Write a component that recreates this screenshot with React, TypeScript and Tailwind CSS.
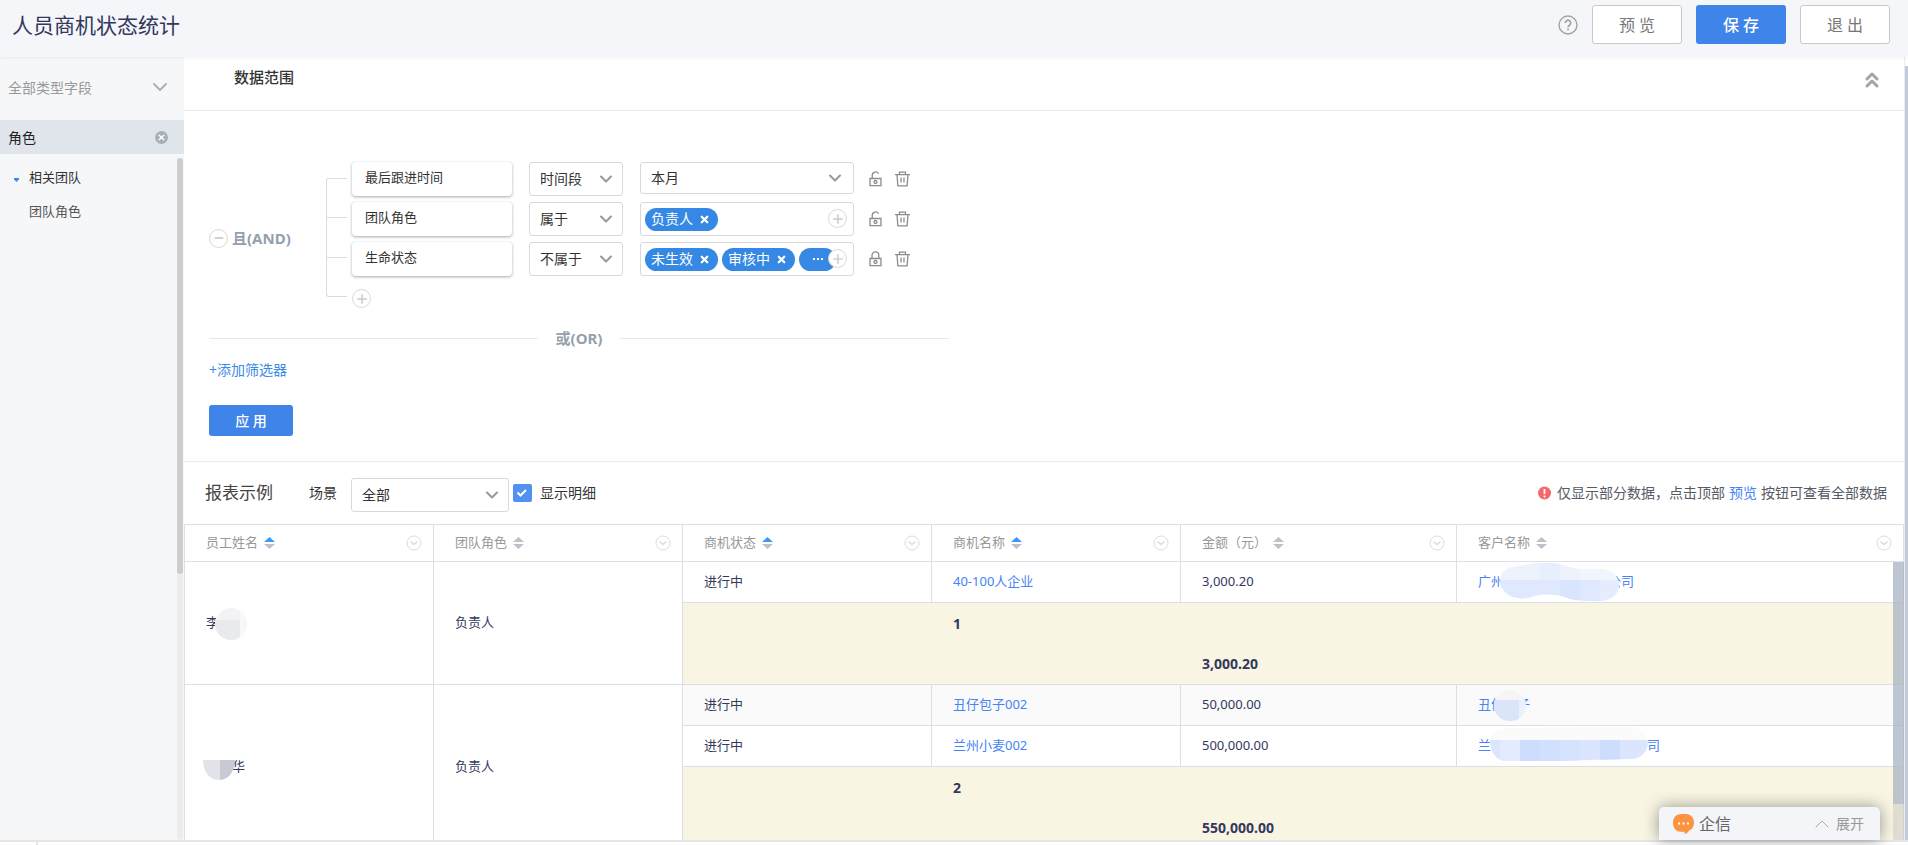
import type { ReactNode } from 'react';
import { ChevronDown, ChevronUp, ChevronsUp, Minus, Plus, X } from 'lucide-react';

type Sort = 'asc' | 'none';

const columns: { label: string; sort: Sort; width: string }[] = [
  { label: '员工姓名', sort: 'asc', width: 'w-[249px]' },
  { label: '团队角色', sort: 'none', width: 'w-[249px]' },
  { label: '商机状态', sort: 'asc', width: 'w-[249px]' },
  { label: '商机名称', sort: 'asc', width: 'w-[249px]' },
  { label: '金额（元）', sort: 'none', width: 'w-[276px]' },
  { label: '客户名称', sort: 'none', width: '' },
];

const filters = [
  { field: '最后跟进时间', operator: '时间段', value: '本月', tags: [], locked: false },
  { field: '团队角色', operator: '属于', value: '', tags: ['负责人'], locked: false },
  { field: '生命状态', operator: '不属于', value: '', tags: ['未生效', '审核中'], more: true, locked: true },
];

function SelectBox({ label, value, className, arrow }: { label: string; value: string; className: string; arrow: string }) {
  return (
    <div className={`relative ${className}`}>
      <select
        aria-label={label}
        className="block w-full h-full appearance-none rounded-[3px] border border-[#d9d9d9] bg-white pl-[10px] text-sm text-[#333]"
      >
        <option>{value}</option>
      </select>
      <ChevronDown
        className={`absolute top-1/2 -translate-y-1/2 w-5 h-5 text-[#999] pointer-events-none ${arrow}`}
        strokeWidth={2.5}
      />
    </div>
  );
}

function RoundIcon({ label, children }: { label: string; children: ReactNode }) {
  return (
    <button
      aria-label={label}
      className="w-[19px] h-[19px] shrink-0 rounded-full border border-[#d9d9d9] bg-white text-[#d0d0d0] flex items-center justify-center"
    >
      {children}
    </button>
  );
}

function LockIcon({ locked }: { locked: boolean }) {
  return (
    <svg width="13" height="16" viewBox="0 0 13 16" fill="none" stroke="#8c8c8c" strokeWidth="1.3">
      <path d="M1 7.5h11v7.2H1z" />
      <path d={locked ? 'M3 7.5V4.3a3.4 3.4 0 0 1 6.8 0v3.2' : 'M3.2 7.5V4.3A3.4 3.4 0 0 1 9.6 2.8'} />
      <circle cx="6.5" cy="11" r="1.5" />
    </svg>
  );
}

function TrashIcon() {
  return (
    <svg width="15" height="16" viewBox="0 0 15 16" fill="none" stroke="#8c8c8c" strokeWidth="1.3">
      <path d="M0 3.6h15M4.5 3.4V1.2h6v2.2M2 3.8l.9 11h9.2l.9-11M6 6.5v5M9 6.5v5" />
    </svg>
  );
}

function SortIcon({ sort }: { sort: Sort }) {
  return (
    <svg width="11" height="12" viewBox="0 0 11 12">
      <path d="M5.5 0L11 5H0z" fill={sort === 'asc' ? '#3e97fb' : '#bcc1cc'} />
      <path d="M5.5 12L11 7H0z" fill="#bcc1cc" />
    </svg>
  );
}

function ColumnMenuIcon() {
  return (
    <svg width="16" height="16" viewBox="0 0 16 16" fill="none">
      <circle cx="8" cy="8" r="7" stroke="#dcdcdc" />
      <path d="M4.5 6.5L8 9.5l3.5-3" stroke="#dcdcdc" strokeWidth="1.6" />
    </svg>
  );
}

/* Mosaic patches that hide parts of personal names */
function Mosaic({ id, shape, width, height, tiles, className }: {
  id: string;
  shape: string;
  width: number;
  height: number;
  tiles: [number, number, number, number, string][];
  className: string;
}) {
  return (
    <svg className={`absolute ${className}`} width={width} height={height} viewBox={`0 0 ${width} ${height}`}>
      <clipPath id={id}>
        <path d={shape} />
      </clipPath>
      <g clipPath={`url(#${id})`} shapeRendering="crispEdges">
        {tiles.map(([x, y, w, h, fill], i) => (
          <rect key={i} x={x} y={y} width={w} height={h} fill={fill} />
        ))}
      </g>
    </svg>
  );
}

function Cell({ children, rowSpan }: { children?: ReactNode; rowSpan?: number }) {
  return (
    <td rowSpan={rowSpan} className="relative border-b border-r border-[#dcdfe6] pl-[21px] align-middle">
      {children}
    </td>
  );
}

function DetailCells({ name, amount, customer }: { name: string; amount: string; customer: ReactNode }) {
  return (
    <>
      <Cell>进行中</Cell>
      <Cell>
        <a href="#" className="text-[#4583f6]">{name}</a>
      </Cell>
      <Cell>{amount}</Cell>
      <Cell>{customer}</Cell>
    </>
  );
}

function SummaryRows({ count, amount }: { count: string; amount: string }) {
  return (
    <>
      <tr className="h-[41px] bg-[#f8f5e3] text-sm font-bold">
        <td />
        <td className="pl-[21px]">{count}</td>
        <td />
        <td className="border-r border-[#dcdfe6]" />
      </tr>
      <tr className="h-[41px] bg-[#f8f5e3] text-sm font-bold">
        <td className="border-b border-[#dcdfe6]" />
        <td className="border-b border-[#dcdfe6]" />
        <td className="border-b border-[#dcdfe6] pl-[21px]">{amount}</td>
        <td className="border-b border-r border-[#dcdfe6]" />
      </tr>
    </>
  );
}

function TopBar() {
  return (
    <header className="relative z-10 h-[57px] shrink-0 bg-[#f4f6fa] shadow-[0_1px_3px_rgba(0,0,0,0.06)] flex items-start pl-3 pr-[18px]">
      <h1 className="text-[21px] leading-[30px] pt-[10px] text-[#33385c]">人员商机状态统计</h1>
      <div className="ml-auto flex gap-[14px] pt-[5px] text-base">
        <button aria-label="帮助" className="h-10 flex items-center">
          <svg width="20" height="20" viewBox="0 0 20 20" fill="none" stroke="#a3a3a3" strokeWidth="1.4">
            <circle cx="10" cy="10" r="9" />
            <path d="M7.3 8a2.7 2.7 0 1 1 4.2 2.2c-.9.6-1.4 1-1.4 2" strokeWidth="1.7" />
            <path d="M10.1 13.5v1.7" strokeWidth="1.7" />
          </svg>
        </button>
        <button className="w-[90px] h-[39px] rounded-[3px] border border-[#c9c9c9] bg-white text-[#777]">预 览</button>
        <button className="w-[90px] h-[39px] rounded-[3px] bg-[#3e84e9] text-white font-medium">保 存</button>
        <button className="w-[90px] h-[39px] rounded-[3px] border border-[#c9c9c9] bg-white text-[#777]">退 出</button>
      </div>
    </header>
  );
}

function Sidebar() {
  return (
    <aside className="w-[184px] shrink-0 bg-[#f5f7f9] flex flex-col">
      <div className="relative h-[63px] shrink-0">
        <select aria-label="字段类型" className="block w-full h-full appearance-none pl-2 pb-[2px] text-sm text-[#999]">
          <option>全部类型字段</option>
        </select>
        <ChevronDown className="absolute right-3 top-[18px] w-6 h-6 text-[#a6b3bd] pointer-events-none" strokeWidth={2} />
      </div>
      <div className="relative h-[34px] shrink-0 bg-[#e0e5ec]">
        <input aria-label="搜索字段" defaultValue="角色" className="block w-full h-full pl-2 text-sm text-[#222] outline-none" />
        <button
          aria-label="清除"
          className="absolute right-4 top-[11px] w-[13px] h-[13px] rounded-full bg-[#a6b1bb] text-white flex items-center justify-center"
        >
          <X className="w-[9px] h-[9px]" strokeWidth={4} />
        </button>
      </div>
      <div className="flex-1 min-h-0 flex pt-1">
        <ul className="flex-1 pt-[3px] text-[13px]">
          <li className="h-[34px] flex items-center pl-[14px] text-[#333]">
            <svg width="5" height="4" viewBox="0 0 5 4" className="mt-1 mr-[10px]">
              <path d="M0 0h5v1.5L2.5 4 0 1.5z" fill="#3b8bf0" />
            </svg>
            相关团队
          </li>
          <li className="h-[34px] flex items-center pl-[29px] text-[#555]">团队角色</li>
        </ul>
        <div className="w-[6px] mr-px rounded-full bg-[#ececec]">
          <div className="h-[61%] rounded-full bg-[#cdcdcd]" />
        </div>
      </div>
    </aside>
  );
}

function FilterSection() {
  return (
    <section className="border-b border-[#ebebeb] px-[25px] pt-[51px] pb-[25px]">
      <div className="flex">
        <div className="w-[117px] shrink-0 pt-16">
          <div className="h-6 flex items-center gap-1 text-[15px] font-bold text-[#93a0ae]">
            <RoundIcon label="移除条件组"><Minus className="w-3 h-3" strokeWidth={4} /></RoundIcon>
            <span>且(AND)</span>
          </div>
        </div>
        <div className="w-[21px] mr-[5px] mt-4 h-[119px] border border-r-0 border-[#dcdcdc] rounded-l-[3px]">
          <div className="h-[39px] border-b border-[#dcdcdc]" />
          <div className="h-10 border-b border-[#dcdcdc]" />
        </div>
        <div className="flex flex-col gap-[6px]">
          {filters.map((f) => (
            <div key={f.field} className="h-[34px] flex items-start">
              <button className="w-[160px] h-[34px] mr-[17px] rounded-[4px] bg-white shadow-[0_1px_3px_rgba(100,115,130,0.6)] pl-[13px] pb-[2px] text-left text-[13px] text-[#333]">
                {f.field}
              </button>
              <SelectBox label={`${f.field}条件`} value={f.operator} className="w-[94px] h-[34px] mr-[17px]" arrow="right-[7px]" />
              {f.value ? (
                <SelectBox label={`${f.field}取值`} value={f.value} className="w-[214px] h-8" arrow="right-[9px]" />
              ) : (
                <div className="relative w-[214px] h-[34px] rounded-[3px] border border-[#d9d9d9] flex items-center gap-1 pl-1">
                  {f.tags.map((tag) => (
                    <span key={tag} className="h-[23px] rounded-full bg-[#3688e5] text-white text-sm flex items-center pl-[6px] pr-2 gap-[6px]">
                      {tag}
                      <button aria-label={`移除${tag}`}><X className="w-[11px] h-[11px]" strokeWidth={5} /></button>
                    </span>
                  ))}
                  {f.more && (
                    <span className="w-[37px] h-[23px] rounded-full bg-[#3688e5] flex items-center gap-[2px] pl-[14px]">
                      <i className="w-[2px] h-[2px] bg-white" />
                      <i className="w-[2px] h-[2px] bg-white" />
                      <i className="w-[2px] h-[2px] bg-white" />
                    </span>
                  )}
                  <div className="absolute right-[6px] top-[6px]">
                    <RoundIcon label={`添加${f.field}`}><Plus className="w-[14px] h-[14px]" strokeWidth={3} /></RoundIcon>
                  </div>
                </div>
              )}
              <button aria-label={f.locked ? '解锁' : '锁定'} className="h-[34px] ml-[15px] mr-[13px]"><LockIcon locked={f.locked} /></button>
              <button aria-label="删除" className="h-[34px]"><TrashIcon /></button>
            </div>
          ))}
          <div className="pt-[7px]">
            <RoundIcon label="添加条件"><Plus className="w-[14px] h-[14px]" strokeWidth={3} /></RoundIcon>
          </div>
        </div>
      </div>

      <div className="mt-[18px] h-6 max-w-[740px] flex items-center gap-[18px] text-[15px] font-bold text-[#93a0ae]">
        <span className="h-px flex-1 bg-[#e8e8e8]" />
        或(OR)
        <span className="h-px flex-1 bg-[#e8e8e8]" />
      </div>
      <div className="mt-2 h-6 flex items-center">
        <a href="#" className="text-sm text-[#3b8be6]">+添加筛选器</a>
      </div>
      <button className="block mt-[23px] w-[84px] h-[31px] rounded-[3px] bg-[#3e84e9] text-sm font-medium text-white">应 用</button>
    </section>
  );
}

function ReportToolbar() {
  return (
    <div className="h-[62px] pl-[21px] pr-[17px] flex items-center text-sm text-[#333]">
      <h2 className="text-[17px] text-[#444]">报表示例</h2>
      <span className="ml-9 mr-[14px]">场景</span>
      <SelectBox label="场景" value="全部" className="w-[158px] h-[34px] mt-1" arrow="right-[7px]" />
      <label className="ml-1 flex items-center gap-2">
        <span className="relative w-[19px] h-[18px]">
          <input type="checkbox" defaultChecked className="block w-full h-full appearance-none rounded-[2px] bg-[#5391f1]" />
          <svg className="absolute inset-0 pointer-events-none" width="19" height="18" viewBox="0 0 19 18" fill="none">
            <path d="M4.5 8.5l3 3 5.5-5.5" stroke="#fff" strokeWidth="2" />
          </svg>
        </span>
        显示明细
      </label>
      <p className="ml-auto flex items-center text-[#555a66]">
        <svg width="13" height="14" viewBox="0 0 13 14" className="mr-[6px]">
          <circle cx="6.5" cy="7" r="6.5" fill="#f4676b" />
          <path d="M6.5 3v5M6.5 9.5v2" stroke="#fff" strokeWidth="1.8" />
        </svg>
        仅显示部分数据，点击顶部
        <a href="#" className="mx-1 text-[#4583f6]">预览</a>
        按钮可查看全部数据
      </p>
    </div>
  );
}

function ReportTable() {
  return (
    <div className="relative flex-1 min-h-0 overflow-hidden">
      <table className="w-full table-fixed border-separate border-spacing-0 border-l border-[#dcdfe6] text-[13px] text-[#33385c]">
        <thead>
          <tr className="h-[38px]">
            {columns.map((c) => (
              <th key={c.label} className={`${c.width} border-y border-r border-[#dcdfe6] pl-[21px] pr-[11px] font-normal text-[#999]`}>
                <div className="flex items-center gap-[6px]">
                  {c.label}
                  <button aria-label={`按${c.label}排序`}><SortIcon sort={c.sort} /></button>
                  <button aria-label={`${c.label}菜单`} className="ml-auto"><ColumnMenuIcon /></button>
                </div>
              </th>
            ))}
          </tr>
        </thead>
        <tbody>
          <tr className="h-[41px]">
            <Cell rowSpan={3}>
              李
              <Mosaic
                id="mask-li"
                className="left-[30px] top-[46px]"
                width={32}
                height={32}
                shape="M16 0a16 16 0 1 1 0 32a16 16 0 1 1 0-32z"
                tiles={[[0, 0, 32, 32, '#f8f8f9'], [5, 0, 20, 12, '#f3f3f5'], [0, 12, 25, 20, '#e9eaed']]}
              />
            </Cell>
            <Cell rowSpan={3}>负责人</Cell>
            <DetailCells
              name="40-100人企业"
              amount="3,000.20"
              customer={
                <a href="#" className="flex gap-[104px] text-[#4583f6]">
                  <span>广州</span>
                  <span>公司</span>
                  <Mosaic
                    id="mask-gz"
                    className="left-[43px] top-[1px]"
                    width={119}
                    height={38}
                    shape="M0 16C1 8 8 3 20 3C34-1 54-1 64 2C76 7 84 6 100 6C112 6 119 14 119 22C119 32 110 38 98 38C84 38 74 38 62 33C50 31 42 31 34 33C26 37 12 36 6 30C2 26 0 22 0 16z"
                    tiles={[
                      [0, 0, 119, 17, '#edf2fd'],
                      [40, 0, 20, 17, '#e8effc'],
                      [80, 0, 39, 17, '#f1f5fe'],
                      [0, 17, 119, 21, '#dfe8fe'],
                      [60, 17, 20, 21, '#d9e5fd'],
                      [100, 17, 19, 21, '#e5ecfd'],
                    ]}
                  />
                </a>
              }
            />
          </tr>
          <SummaryRows count="1" amount="3,000.20" />
          <tr className="h-[41px]">
            <Cell rowSpan={4}>
              <span className="pl-[26px]">华</span>
              <Mosaic
                id="mask-hua"
                className="left-[18px] top-[75px]"
                width={32}
                height={20}
                shape="M0 0h32C32 11 26 20 16 20S0 11 0 0z"
                tiles={[[0, 0, 17, 20, '#e2e3e8'], [17, 0, 15, 20, '#c8cad3']]}
              />
            </Cell>
            <Cell rowSpan={4}>负责人</Cell>
            <td className="bg-[#fafafa] border-b border-r border-[#dcdfe6] pl-[21px]">进行中</td>
            <td className="bg-[#fafafa] border-b border-r border-[#dcdfe6] pl-[21px]">
              <a href="#" className="text-[#4583f6]">丑仔包子002</a>
            </td>
            <td className="bg-[#fafafa] border-b border-r border-[#dcdfe6] pl-[21px]">50,000.00</td>
            <td className="relative bg-[#fafafa] border-b border-r border-[#dcdfe6] pl-[21px]">
              <a href="#" className="text-[#4583f6]">丑仔包子</a>
              <Mosaic
                id="mask-chou"
                className="left-[37px] top-[5px]"
                width={32}
                height={31}
                shape="M16 0a16 15.5 0 1 1 0 31a16 15.5 0 1 1 0-31z"
                tiles={[[0, 0, 32, 10, '#f5f5f5'], [0, 10, 32, 21, '#eaf0fc'], [0, 10, 25, 21, '#dae5f9']]}
              />
            </td>
          </tr>
          <tr className="h-[41px]">
            <DetailCells
              name="兰州小麦002"
              amount="500,000.00"
              customer={
                <a href="#" className="flex gap-[156px] text-[#4583f6]">
                  <span>兰</span>
                  <span>司</span>
                  <Mosaic
                    id="mask-lan"
                    className="left-[33px] top-[1px]"
                    width={158}
                    height={34}
                    shape="M0 14C0 6 8 1 16 1L140 0C150 0 158 7 158 15C158 25 150 32 142 32L98 33 70 34H16C7 34 0 26 0 14z"
                    tiles={[
                      [0, 0, 158, 13, '#fbfbfc'],
                      [0, 13, 158, 21, '#dbe6fe'],
                      [10, 13, 20, 21, '#e4ebfe'],
                      [30, 13, 20, 21, '#cdddfe'],
                      [50, 13, 20, 21, '#d0e0fe'],
                      [70, 13, 20, 21, '#d6e3fe'],
                      [110, 13, 20, 21, '#cdddfe'],
                    ]}
                  />
                </a>
              }
            />
          </tr>
          <SummaryRows count="2" amount="550,000.00" />
        </tbody>
      </table>
      {/* Translucent scrollbar over the table body */}
      <div className="absolute right-0 top-[38px] bottom-0 w-[11px] bg-[#b8b8b8]/40">
        <div className="h-[87%] bg-[#a5b3c6]/60" />
      </div>
    </div>
  );
}

function ChatDock() {
  return (
    <button className="absolute right-7 bottom-[5px] z-20 w-[221px] h-[33px] rounded-t-[5px] bg-[#f3f5f8] shadow-[0_0_16px_rgba(0,0,0,0.4)] flex items-center pl-[14px] pr-4">
      <svg width="21" height="20" viewBox="0 0 21 20">
        <path
          d="M8 0h5c5 0 8 3.600 8 8.500c0 4-1.800 7-5 8c-.6 1.700-2.500 3.200-4.500 3.500c.3-.8.300-1.500-.2-2.200H8C3 17.800 0 14 0 9C0 3.600 3 0 8 0z"
          fill="#fd9340"
        />
        <path d="M5 8.500h2v2H5zM9.500 8.500h2v2h-2zM14 8.500h2v2h-2z" fill="#fff" />
      </svg>
      <span className="ml-[5px] text-base text-[#666]">企信</span>
      <ChevronUp className="ml-auto mr-[2px] w-6 h-6 text-[#aaa]" strokeWidth={1} />
      <span className="text-sm text-[#999]">展开</span>
    </button>
  );
}

export default function App() {
  return (
    <div className="relative h-screen flex flex-col overflow-hidden bg-white font-['Noto_Sans','Noto_Sans_CJK_SC',sans-serif]">
      <TopBar />
      <div className="flex-1 min-h-0 flex">
        <Sidebar />
        <main className="flex-1 min-w-0 flex flex-col">
          <div className="h-[54px] shrink-0 border-b border-[#ebebeb] pl-[50px] pr-5 flex items-start justify-between">
            <h2 className="pt-2 text-[15px] leading-6 font-medium text-[#333]">数据范围</h2>
            <button aria-label="收起" className="pt-[11px]">
              <ChevronsUp className="w-6 h-6 text-[#9aa7b1]" strokeWidth={3} />
            </button>
          </div>
          <FilterSection />
          <ReportToolbar />
          <ReportTable />
        </main>
        <div className="w-1 shrink-0 pt-[9px] flex flex-col border-l border-[#ececec]">
          <div className="flex-1 bg-[#c3cbd9]" />
        </div>
      </div>
      <footer className="h-[5px] shrink-0 border-t-2 border-[#e6e6e6] pl-9">
        <div className="w-[2px] h-full bg-[#e6e6e6]" />
      </footer>
      <ChatDock />
    </div>
  );
}
